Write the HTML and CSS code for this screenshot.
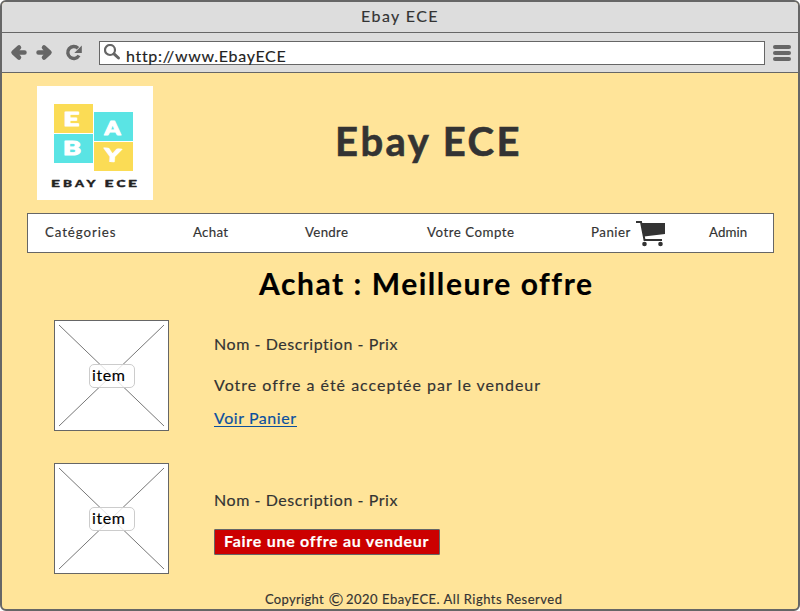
FILE: index.html
```html
<!DOCTYPE html>
<html lang="fr">
<head>
<meta charset="utf-8">
<title>Ebay ECE</title>
<link rel="stylesheet" href="styles.css">
</head>
<body>
<div class="window">
  <div class="titlebar"><span>Ebay ECE</span></div>
  <div class="toolbar">
    <svg class="tools" width="80" height="20" viewBox="0 0 80 20">
      <g fill="none" stroke="#666" stroke-width="4.500" stroke-linecap="round" stroke-linejoin="round">
        <path d="M11 5.500L5.500 10.500l5.500 5M6 10.500h10.500"/>
        <path d="M36 5.500l5.500 5-5.500 5M41 10.500H30.500"/>
      </g>
      <path d="M70 6.200A6 6 0 1 0 71 13.500" fill="none" stroke="#666" stroke-width="3.400"/>
      <path d="M73.800 3.500v7.500H66.300z" fill="#666"/>
    </svg>
    <div class="address">
      <svg width="18" height="18" viewBox="0 0 18 18" fill="none" stroke="#666">
        <circle cx="6" cy="6" r="5" stroke-width="2.200"/>
        <path d="M10 9.800L14.500 14" stroke-width="3" stroke-linecap="round"/>
      </svg>
      <span class="url">http://www.EbayECE</span>
    </div>
    <div class="menu"><i></i><i></i><i></i></div>
  </div>

  <main>
    <header>
      <div class="logo">
        <svg width="116" height="114" viewBox="0 0 116 114">
          <path fill="#fbdc55" d="M17 18h39v29H17zM57 56h39v29H57z"/>
          <path fill="#5ae4e4" d="M17 48h39v29H17zM57 26h39v29H57z"/>
          <g class="tile">
            <text x="26.500" y="40" textLength="16" lengthAdjust="spacingAndGlyphs">E</text>
            <text x="67.500" y="48.500" textLength="16" lengthAdjust="spacingAndGlyphs">A</text>
            <text x="26" y="68.500" textLength="18" lengthAdjust="spacingAndGlyphs">B</text>
            <text x="67" y="75.500" textLength="17" lengthAdjust="spacingAndGlyphs" transform="rotate(4 75 70)">Y</text>
          </g>
          <g class="brand">
            <text x="14" y="100.500" textLength="9" lengthAdjust="spacingAndGlyphs">E</text>
            <text x="26" y="100.500" textLength="9" lengthAdjust="spacingAndGlyphs">B</text>
            <text x="38" y="100.500" textLength="9" lengthAdjust="spacingAndGlyphs">A</text>
            <text x="49.500" y="100.500" textLength="9" lengthAdjust="spacingAndGlyphs">Y</text>
            <text x="67.500" y="100.500" textLength="9" lengthAdjust="spacingAndGlyphs">E</text>
            <text x="79.500" y="100.500" textLength="9" lengthAdjust="spacingAndGlyphs">C</text>
            <text x="91" y="100.500" textLength="9" lengthAdjust="spacingAndGlyphs">E</text>
          </g>
        </svg>
      </div>
      <h1>Ebay ECE</h1>
    </header>

    <nav>
      <a class="n1">Catégories</a>
      <a class="n2">Achat</a>
      <a class="n3">Vendre</a>
      <a class="n4">Votre Compte</a>
      <a class="n5">Panier
        <svg width="31" height="27" viewBox="0 0 31 27">
          <path d="M1 2h5l3.500 18H27" fill="none" stroke="#333" stroke-width="2"/>
          <path d="M6 3h24v11L9 16.500z" fill="#333"/>
          <circle cx="9.500" cy="24" r="2.300" fill="#333"/>
          <circle cx="25.500" cy="24" r="2.300" fill="#333"/>
        </svg>
      </a>
      <a class="n6">Admin</a>
    </nav>

    <h2>Achat : Meilleure offre</h2>

    <section class="item">
      <div class="thumb">
        <svg width="113" height="109" viewBox="0 0 113 109"><path d="M4 4l105 101M109 4L4 105" stroke="#777" fill="none"/></svg>
        <span>item</span>
      </div>
      <div class="info">
        <p class="name">Nom - Description - Prix</p>
        <p class="status">Votre offre a été acceptée par le vendeur</p>
        <a class="link">Voir Panier</a>
      </div>
    </section>

    <section class="item">
      <div class="thumb">
        <svg width="113" height="109" viewBox="0 0 113 109"><path d="M4 4l105 101M109 4L4 105" stroke="#777" fill="none"/></svg>
        <span>item</span>
      </div>
      <div class="info second">
        <p class="name">Nom - Description - Prix</p>
        <button>Faire une offre au vendeur</button>
      </div>
    </section>

    <footer><span class="copy">Copyright</span><span class="sign">©</span><span class="rights">2020 EbayECE. All Rights Reserved</span></footer>
  </main>
</div>
</body>
</html>
```
FILE: styles.css
```css
* { box-sizing: border-box; }
body { margin: 0; background: #fff; font: 16px/20px Lato, "Open Sans", sans-serif; color: #333; -webkit-text-stroke: 0.15px; font-variant-ligatures: none; }
h1, h2, p { margin: 0; white-space: nowrap; }
svg { display: block; flex: none; }
.window { width: 800px; height: 611px; border: 2px solid #666; border-radius: 6px; background: #ffe499; overflow: hidden; }
.titlebar { height: 31px; padding: 4px 0 0 359px; background: #ddd; border-bottom: 1px solid #666; letter-spacing: 1.4px; }
.toolbar { height: 40px; display: flex; padding: 8px 7px 0 6px; background: #ddd; border-bottom: 1px solid #666; }
.tools { margin: 1px 11px 0 0; }
.address { width: 666px; height: 24px; display: flex; padding: 2px 0 0 4px; background: #fff; border: 1px solid #666; }
.url { margin: 2px 0 0 4px; letter-spacing: 0.680px; color: #222; }
.menu { width: 18px; margin: 4px 0 0 8px; display: grid; gap: 2px; align-content: start; }
.menu i { height: 4px; border-radius: 2px; background: #666; }

header { display: flex; padding: 13px 0 0 35px; }
.logo { width: 116px; height: 114px; background: #fff; }
.tile { font: 900 18px Lato, sans-serif; fill: #fff; stroke: #fff; stroke-width: 1px; stroke-linejoin: round; }
.brand { font: 900 10px Lato, sans-serif; fill: #222; stroke: #222; stroke-width: 0.4px; stroke-linejoin: round; }
h1 { height: 48px; margin: 31px 0 0 182px; font-size: 40px; line-height: 48px; letter-spacing: 2.5px; -webkit-text-stroke: 0.6px; }

nav { width: 747px; height: 40px; margin: 13px 0 0 25px; display: grid; grid-template-columns: 148px 112px 122px 164px 118px 1fr; padding: 8px 0 0 17px; background: #fff; border: 1px solid #666; font-size: 13.300px; white-space: nowrap; letter-spacing: 0.3px; }
nav svg { margin: -2px 0 0 4px; }
.n1 { letter-spacing: 0.9px; }
.n4 { letter-spacing: 0.5px; }
.n5 { display: flex; letter-spacing: 0.5px; }
.n6 { letter-spacing: 0.1px; }

h2 { margin: 10px 0 0 257px; color: #000; font-size: 30px; line-height: 40px; letter-spacing: 1.550px; }

.item { height: 111px; display: flex; margin: 17px 0 0 52px; }
.item + .item { margin-top: 32px; }
.thumb { width: 115px; height: 111px; display: grid; background: #fff; border: 1px solid #666; }
.thumb svg, .thumb span { grid-area: 1 / 1; }
.thumb span { width: 46px; height: 24px; margin: 43px 0 0 34px; padding: 0 0 0 2px; border: 1px solid #ccc; border-radius: 5px; background: rgba(255,255,255,.8); color: #000; letter-spacing: 0.6px; }
.info { padding: 14px 0 0 45px; }
.second { padding-top: 27px; }
.name { letter-spacing: 0.550px; }
.status { margin-top: 21px; letter-spacing: 1px; }
.link { display: inline-block; height: 19px; margin-top: 13px; color: #0b4f9e; border-bottom: 1px solid #0b4f9e; letter-spacing: 0.550px; }
button { display: block; width: 226px; height: 26px; margin-top: 19px; padding: 0 0 2px 9px; border: 1px solid #666; border-radius: 1px; background: #c00; color: #fff; font: bold 16px/20px Lato, sans-serif; text-align: left; white-space: nowrap; letter-spacing: 0.720px; }
footer { display: flex; margin: 15px 0 0 263px; font-size: 13px; }
.copy { width: 61px; letter-spacing: 0.3px; }
.sign { width: 20px; text-align: center; font-size: 18px; -webkit-text-stroke: 0; }
.rights { letter-spacing: 0.5px; }
```
